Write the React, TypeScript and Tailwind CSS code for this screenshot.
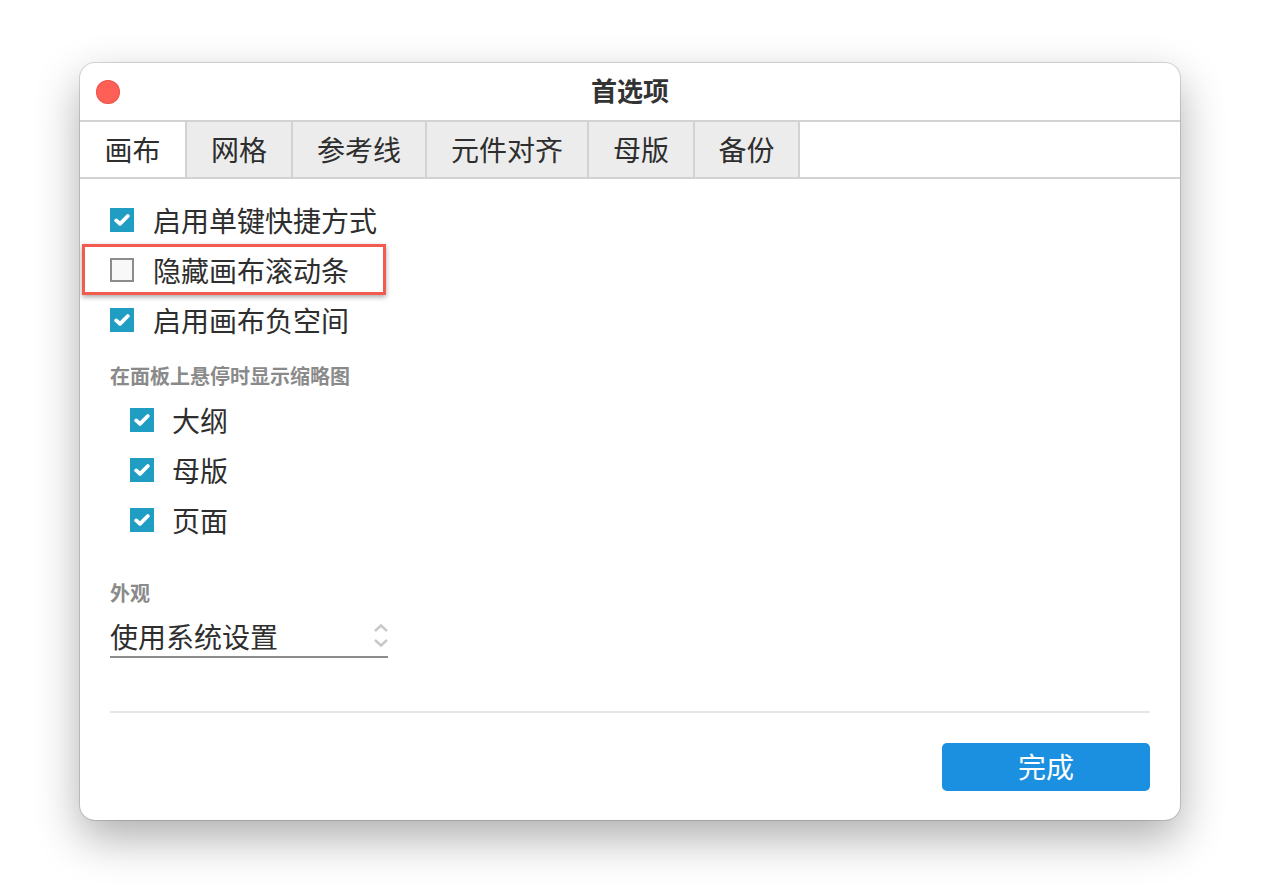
import React from "react";

const font = { fontFamily: '"Noto Sans CJK SC", "Noto Sans", sans-serif' };

// 选项卡
const tabs = [
  { label: "画布", w: "w-[107px]", active: true },
  { label: "网格", w: "w-[106px]" },
  { label: "参考线", w: "w-[134px]" },
  { label: "元件对齐", w: "w-[162px]" },
  { label: "母版", w: "w-[106px]" },
  { label: "备份", w: "w-[105px]" },
];

function CheckBox({ checked }: { checked: boolean }) {
  if (!checked) {
    return <span className="block h-[24px] w-[24px] border-2 border-[#8c8c8c] bg-[#f8f8f8]" />;
  }
  return (
    <span className="flex h-[24px] w-[24px] items-center justify-center bg-[#1f9dc3]">
      <svg width="16" height="14" viewBox="0 0 16 14">
        <path d="M2.2 7.4 L6 10.8 L13.8 3" fill="none" stroke="#fff" strokeWidth="3.8" strokeLinecap="round" strokeLinejoin="round" />
      </svg>
    </span>
  );
}

function Row({ label, checked, indent }: { label: string; checked: boolean; indent?: boolean }) {
  return (
    <div className={`flex h-[50px] items-center ${indent ? "pl-[20px]" : ""}`}>
      <CheckBox checked={checked} />
      <span className={`${indent ? "ml-[18px]" : "ml-[19px]"} text-[28px] leading-none text-[#2e2e2e]`}>{label}</span>
    </div>
  );
}

export default function App() {
  return (
    <div className="h-[896px] w-[1266px] bg-white pl-[80px] pt-[63px]" style={font}>
      <div className="flex h-[757px] w-[1100px] flex-col overflow-hidden rounded-[15px] bg-white shadow-[0_18px_45px_rgba(0,0,0,0.32),0_0_0_1px_rgba(0,0,0,0.14)]">
        {/* Title bar */}
        <div className="relative flex h-[57px] items-center justify-center">
          <span className="absolute left-[16px] top-[17px] h-[24px] w-[24px] rounded-full bg-[#fe5f57] shadow-[inset_0_0_0_1px_rgba(200,60,50,0.35)]" />
          <span className="mt-[-3px] text-[26px] font-bold leading-none text-[#333]">首选项</span>
        </div>

        {/* Tabs */}
        <div className="flex h-[59px] border-y-2 border-[#d2d2d2]">
          {tabs.map((t) => (
            <div
              key={t.label}
              className={`flex ${t.w} items-center justify-center border-r-2 border-[#d2d2d2] pb-[2px] text-[28px] leading-none text-[#2e2e2e] ${t.active ? "bg-white" : "bg-[#ececec]"}`}
            >
              {t.label}
            </div>
          ))}
        </div>

        {/* Content */}
        <div className="flex flex-1 flex-col px-[30px] pt-[16px]">
          <Row label="启用单键快捷方式" checked />
          <div className="relative">
            <div className="pointer-events-none absolute left-[-28px] top-[-1px] h-[51px] w-[304px] border-[3px] border-[#f25c4f] shadow-[0_2px_5px_rgba(0,0,0,0.35)]" />
            <Row label="隐藏画布滚动条" checked={false} />
          </div>
          <Row label="启用画布负空间" checked />

          <div className="mt-[19px] flex h-[24px] items-center text-[20px] font-bold leading-none text-[#8a8a8a]">
            在面板上悬停时显示缩略图
          </div>
          <div className="mt-[7px]">
            <Row label="大纲" checked indent />
            <Row label="母版" checked indent />
            <Row label="页面" checked indent />
          </div>

          <div className="mt-[36px] flex h-[24px] items-center text-[20px] font-bold leading-none text-[#8a8a8a]">外观</div>
          <div className="mt-[10px] flex h-[43px] w-[278px] items-center justify-between border-b-2 border-[#8c8c8c]">
            <span className="text-[28px] leading-none text-[#2e2e2e]">使用系统设置</span>
            <svg width="18" height="26" viewBox="0 0 18 26" className="mr-[-2px]">
              <path d="M3 8 L9 2.5 L15 8" fill="none" stroke="#c8c8c8" strokeWidth="2.4" />
              <path d="M3 17 L9 22.5 L15 17" fill="none" stroke="#c8c8c8" strokeWidth="2.4" />
            </svg>
          </div>

          <div className="mt-[53px] h-[2px] bg-[#e6e6e6]" />

          <div className="mt-[30px] flex justify-end">
            <button className="flex h-[48px] w-[208px] items-center justify-center rounded-[5px] bg-[#1c90e0] pb-[2px] text-[28px] leading-none text-white">
              完成
            </button>
          </div>
        </div>
      </div>
    </div>
  );
}
